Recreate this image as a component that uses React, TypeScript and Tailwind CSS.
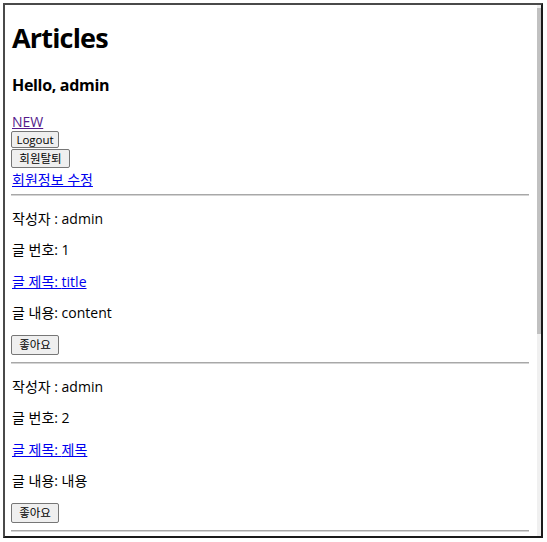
import React from "react";

const font = "font-['Open_Sans','Noto_Sans_CJK_KR',sans-serif]";

function Btn({ children, w, h }: { children: React.ReactNode; w: string; h: string }) {
  return (
    <div
      className={`${w} ${h} flex items-center justify-center border border-[#767676] bg-[#efefef] rounded-[2px] text-[11.5px] leading-[13px] text-black`}
    >
      {children}
    </div>
  );
}

function Hr({ mt }: { mt: string }) {
  return <div className={`${mt} h-[2px] border-t border-t-[#a8a8a8] border-b border-b-[#d4d4d4]`} />;
}

function P({ children, mt, link }: { children: React.ReactNode; mt: string; link?: boolean }) {
  return (
    <div className={`${mt} h-[14px] text-[14px] leading-[14px] whitespace-nowrap pl-[1px]`}>
      {link ? <span className="text-[#0000ee] underline">{children}</span> : <span className="text-black">{children}</span>}
    </div>
  );
}

function Article({ n, title, content }: { n: number; title: string; content: string }) {
  return (
    <div className="flex flex-col">
      <P mt="mt-[15.6px]">작성자 : admin</P>
      <P mt="mt-[17.6px]">글 번호: {n}</P>
      <P mt="mt-[17.6px]" link>
        글 제목: {title}
      </P>
      <P mt="mt-[17.6px]">글 내용: {content}</P>
      <div className="mt-[14.6px] flex">
        <Btn w="w-[48px]" h="h-[20px]">좋아요</Btn>
      </div>
      <Hr mt="mt-[7px]" />
    </div>
  );
}

export default function App() {
  return (
    <div className={`w-[547px] h-[542px] bg-white pt-[3px] pl-[3px] ${font}`}>
      <div className="w-[540px] h-[535px] border-2 border-t-[#4a4a4a] border-l-[#4a4a4a] border-r-[#1a1a1a] border-b-[#1a1a1a] flex overflow-hidden">
        <div className="flex-1 overflow-hidden pl-[6px] pr-[8px] pt-[19px] flex flex-col">
          <div className="h-[28px] text-[27px] leading-[28px] font-bold text-black whitespace-nowrap tracking-[-0.03em] pl-[1px]">
            Articles
          </div>
          <div className="mt-[25px] h-[17px] text-[16px] leading-[17px] font-bold text-black whitespace-nowrap tracking-[-0.02em] pl-[1px]">
            Hello, admin
          </div>
          <div className="mt-[21px] h-[14px] text-[14px] leading-[14px] pl-[1px]">
            <span className="text-[#551a8b] underline">NEW</span>
          </div>
          <div className="mt-[2px] flex">
            <Btn w="w-[48px]" h="h-[17px]">Logout</Btn>
          </div>
          <div className="mt-[1px] flex">
            <Btn w="w-[59px]" h="h-[19px]">회원탈퇴</Btn>
          </div>
          <div className="mt-[4.6px] h-[14px] text-[14px] leading-[14px] pl-[1px] whitespace-nowrap">
            <span className="text-[#0000ee] underline">회원정보 수정</span>
          </div>
          <Hr mt="mt-[7.4px]" />
          <Article n={1} title="title" content="content" />
          <Article n={2} title="제목" content="내용" />
        </div>
        <div className="w-[4px] shrink-0 bg-[#f0f0f0] pt-[3px]">
          <div className="h-[326px] bg-[#c1c1c1]" />
        </div>
      </div>
    </div>
  );
}
